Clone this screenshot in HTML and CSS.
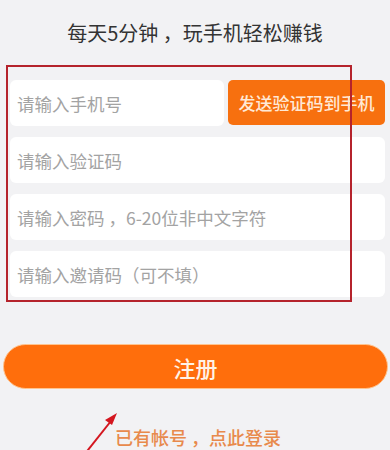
FILE: index.html
```html
<!DOCTYPE html>
<html lang="zh-CN">
<head>
  <meta charset="UTF-8">
  <meta name="viewport" content="width=device-width, initial-scale=1.0">
  <title>注册</title>
  <link rel="stylesheet" href="styles.css">
</head>
<body>
  <div class="page">
    <h1 class="slogan">每天5分钟 ，玩手机轻松赚钱</h1>

    <!-- 注册表单 -->
    <form class="form">
      <div class="row">
        <input class="field" type="tel" placeholder="请输入手机号">
        <button class="btn-code" type="button">发送验证码到手机</button>
      </div>
      <input class="field" type="text" placeholder="请输入验证码">
      <input class="field" type="password" placeholder="请输入密码 ，6-20位非中文字符">
      <input class="field" type="text" placeholder="请输入邀请码（可不填）">
    </form>

    <button class="btn-register" type="button">注册</button>
    <a class="login-link" href="#">已有帐号 ，点此登录</a>

    <!-- 标注 -->
    <div class="mark-box"></div>
    <svg class="mark-arrow" width="60" height="50" viewBox="0 0 60 50">
      <line x1="6" y1="50" x2="33" y2="16" stroke="#d4161f" stroke-width="2" />
      <polygon points="39,8 27,15 34,20" fill="#d4161f" />
    </svg>
  </div>
</body>
</html>
```

FILE: styles.css
```css
* {
  margin: 0;
  padding: 0;
  box-sizing: border-box;
}

body {
  font-family: 'Noto Sans CJK SC', 'Noto Sans', sans-serif;
  background-color: #f2f2f4;
  color: #333;
  width: 390px;
  height: 450px;
  overflow: hidden;
}

.page {
  position: relative;
  height: 450px;
  display: flex;
  flex-direction: column;
}

.slogan {
  padding-top: 23px;
  font-size: 20px;
  line-height: 20px;
  font-weight: 400;
  text-align: center;
  color: #333;
}

/* 表单 */
.form {
  margin-top: 37px;
  padding: 0 5px 0 10px;
  display: flex;
  flex-direction: column;
  gap: 11px;
}

.row {
  display: flex;
  gap: 4px;
}

.field {
  height: 46px;
  border: none;
  outline: none;
  border-radius: 6px;
  background-color: #fff;
  padding: 0 7px;
  font-family: inherit;
  font-size: 17.5px;
  color: #333;
}

.row .field {
  flex: 1;
  min-width: 0;
}

.field::placeholder {
  color: #a3a3a3;
}

.btn-code {
  width: 157px;
  height: 45px;
  border: none;
  border-radius: 5px;
  background-color: #f7700f;
  color: #ffe9d6;
  font-family: inherit;
  font-size: 17px;
  font-weight: 500;
  cursor: pointer;
}

.btn-register {
  margin: 47px 2px 0 3px;
  height: 45px;
  border: 1px solid #ffc48f;
  border-radius: 23px;
  background-color: #ff6e0c;
  color: #fff3e6;
  font-family: inherit;
  font-size: 22px;
  font-weight: 500;
  cursor: pointer;
}

.login-link {
  margin-top: 39px;
  padding-left: 6px;
  font-size: 18px;
  line-height: 18px;
  font-weight: 500;
  text-align: center;
  color: #e88a4c;
  text-decoration: none;
}

/* 红色标注 */
.mark-box {
  position: absolute;
  left: 6px;
  top: 65px;
  width: 346px;
  height: 237px;
  border: 2px solid #b5232c;
  pointer-events: none;
}

.mark-arrow {
  position: absolute;
  left: 78px;
  top: 405px;
  pointer-events: none;
}
```
